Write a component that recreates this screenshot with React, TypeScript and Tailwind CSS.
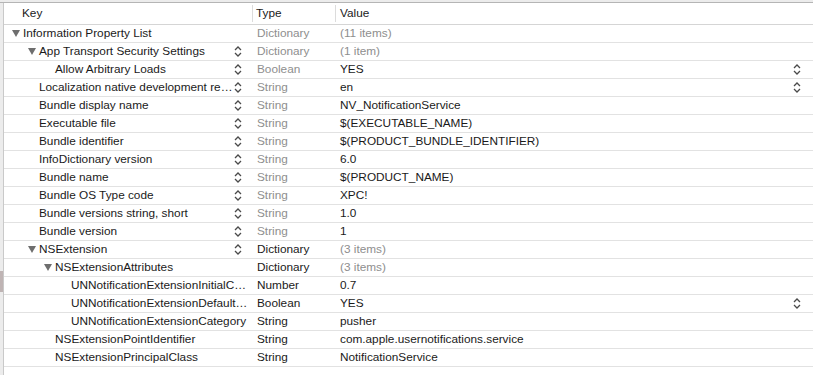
import React from 'react';

type Row = {
  key: string;
  level: number;
  open?: boolean;
  keyStepper?: boolean;
  type: string;
  typeDim?: boolean;
  value: string;
  valueDim?: boolean;
  valueStepper?: boolean;
};

const rows: Row[] = [
  { key: 'Information Property List', level: 0, open: true, type: 'Dictionary', typeDim: true, value: '(11 items)', valueDim: true },
  { key: 'App Transport Security Settings', level: 1, open: true, keyStepper: true, type: 'Dictionary', typeDim: true, value: '(1 item)', valueDim: true },
  { key: 'Allow Arbitrary Loads', level: 2, keyStepper: true, type: 'Boolean', typeDim: true, value: 'YES', valueStepper: true },
  { key: 'Localization native development re…', level: 1, keyStepper: true, type: 'String', typeDim: true, value: 'en', valueStepper: true },
  { key: 'Bundle display name', level: 1, keyStepper: true, type: 'String', typeDim: true, value: 'NV_NotificationService' },
  { key: 'Executable file', level: 1, keyStepper: true, type: 'String', typeDim: true, value: '$(EXECUTABLE_NAME)' },
  { key: 'Bundle identifier', level: 1, keyStepper: true, type: 'String', typeDim: true, value: '$(PRODUCT_BUNDLE_IDENTIFIER)' },
  { key: 'InfoDictionary version', level: 1, keyStepper: true, type: 'String', typeDim: true, value: '6.0' },
  { key: 'Bundle name', level: 1, keyStepper: true, type: 'String', typeDim: true, value: '$(PRODUCT_NAME)' },
  { key: 'Bundle OS Type code', level: 1, keyStepper: true, type: 'String', typeDim: true, value: 'XPC!' },
  { key: 'Bundle versions string, short', level: 1, keyStepper: true, type: 'String', typeDim: true, value: '1.0' },
  { key: 'Bundle version', level: 1, keyStepper: true, type: 'String', typeDim: true, value: '1' },
  { key: 'NSExtension', level: 1, open: true, keyStepper: true, type: 'Dictionary', value: '(3 items)', valueDim: true },
  { key: 'NSExtensionAttributes', level: 2, open: true, type: 'Dictionary', value: '(3 items)', valueDim: true },
  { key: 'UNNotificationExtensionInitialC…', level: 3, type: 'Number', value: '0.7' },
  { key: 'UNNotificationExtensionDefault…', level: 3, type: 'Boolean', value: 'YES', valueStepper: true },
  { key: 'UNNotificationExtensionCategory', level: 3, type: 'String', value: 'pusher' },
  { key: 'NSExtensionPointIdentifier', level: 2, type: 'String', value: 'com.apple.usernotifications.service' },
  { key: 'NSExtensionPrincipalClass', level: 2, type: 'String', value: 'NotificationService' },
];

const Stepper = () => (
  <svg width="8" height="11" viewBox="0 0 8 11" className="shrink-0">
    <path d="M1 4 L4 1 L7 4" fill="none" stroke="#4a4a4a" strokeWidth="1.3" />
    <path d="M1 7 L4 10 L7 7" fill="none" stroke="#4a4a4a" strokeWidth="1.3" />
  </svg>
);

const Disclosure = () => (
  <svg width="8" height="7" viewBox="0 0 8 7" className="shrink-0">
    <path d="M0 0 L8 0 L4 7 Z" fill="#6e6e6e" />
  </svg>
);

const App: React.FC = () => {
  return (
    <div
      className="w-[813px] h-[375px] bg-white flex flex-col overflow-hidden text-[11.8px] text-[#1a1a1a]"
      style={{ fontFamily: '"Liberation Sans", Arial, sans-serif' }}
    >
      <div className="h-[3px] bg-[#ececec] border-b border-[#b5b5b5]" />
      <div className="flex flex-1">
        <div className="w-[4px] bg-[#ececec] border-r border-[#c9c9c9] flex flex-col">
          <div className="h-[268px]" />
          <div className="h-[21px] w-[3px] bg-[#bfb4b4]" />
        </div>
        <div className="flex-1 flex flex-col">
          {/* header */}
          <div className="h-[22px] flex border-b border-[#d5d5d5]">
            <div className="w-[249px] flex items-center pl-[18px] border-r border-[#dcdcdc] my-[2px]">Key</div>
            <div className="w-[83px] flex items-center pl-[3px] border-r border-[#dcdcdc] my-[2px]">Type</div>
            <div className="flex-1 flex items-center pl-[4px]">Value</div>
          </div>
          {rows.map((r, i) => (
            <div key={i} className="h-[18px] flex items-center border-b border-[#e2e2e2]">
              <div className={`w-[249px] shrink-0 flex items-center ${r.keyStepper ? 'pr-[11px]' : 'pr-[1px]'}`}>
                <div className="flex items-center flex-1 min-w-0 overflow-hidden" style={{ paddingLeft: 8 + r.level * 16 }}>
                  <div className="w-[11px] shrink-0 flex items-center">{r.open && <Disclosure />}</div>
                  <span className="whitespace-nowrap">{r.key}</span>
                </div>
                {r.keyStepper && <Stepper />}
              </div>
              <div className={`w-[83px] shrink-0 pl-[4px] whitespace-nowrap ${r.typeDim ? 'text-[#8e8e8e]' : ''}`}>{r.type}</div>
              <div className="flex-1 flex items-center pl-[4px] pr-[12px]">
                <span className={`flex-1 whitespace-nowrap ${r.valueDim ? 'text-[#8e8e8e]' : ''}`}>{r.value}</span>
                {r.valueStepper && <Stepper />}
              </div>
            </div>
          ))}
        </div>
      </div>
    </div>
  );
};

export default App;
